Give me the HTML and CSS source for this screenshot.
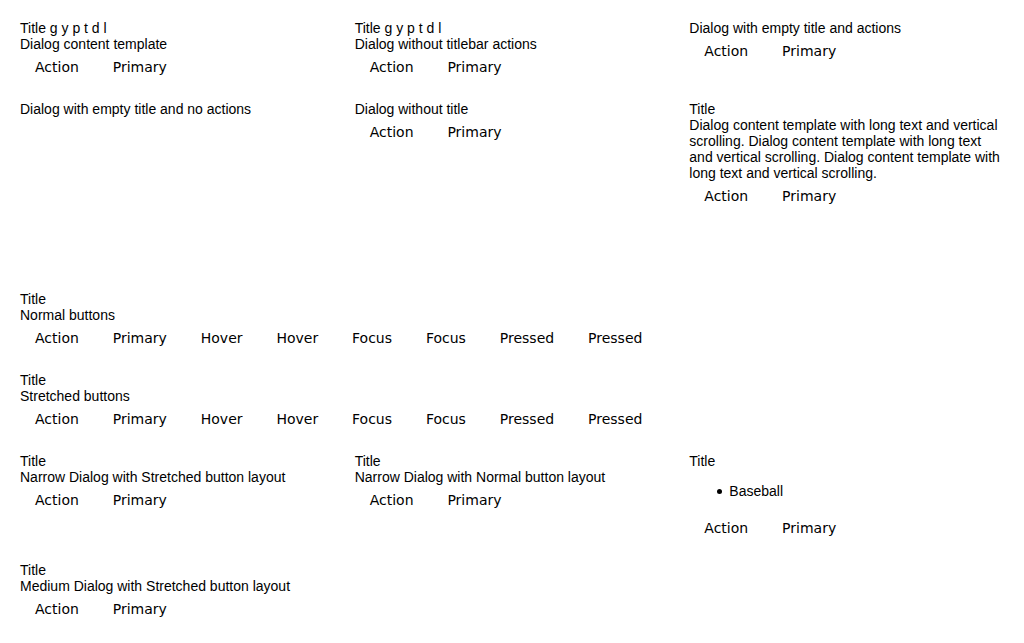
FILE: index.html
```html
<!DOCTYPE html>
<html lang="en">
<head>
<meta charset="utf-8">
<title>Dialog</title>
<link rel="stylesheet" href="styles.css">
</head>
<body>
<main class="grid">
<section class="dialog"><div class="title">Title g y p t d l</div><div>Dialog content template</div><div class="actions"><button>Action</button> <button>Primary</button></div></section>
<section class="dialog"><div class="title">Title g y p t d l</div><div>Dialog without titlebar actions</div><div class="actions"><button>Action</button> <button>Primary</button></div></section>
<section class="dialog"><div>Dialog with empty title and actions</div><div class="actions"><button>Action</button> <button>Primary</button></div></section>

<section class="dialog"><div>Dialog with empty title and no actions</div></section>
<section class="dialog"><div>Dialog without title</div><div class="actions"><button>Action</button> <button>Primary</button></div></section>
<section class="dialog tall"><div class="title">Title</div><div>Dialog content template with long text and vertical scrolling. Dialog content template with long text and vertical scrolling. Dialog content template with long text and vertical scrolling.</div><div class="actions"><button>Action</button> <button>Primary</button></div></section>

<section class="dialog wide"><div class="title">Title</div><div>Normal buttons</div><div class="actions"><button>Action</button> <button>Primary</button> <button>Hover</button> <button>Hover</button> <button>Focus</button> <button>Focus</button> <button>Pressed</button> <button>Pressed</button></div></section>
<section class="dialog wide"><div class="title">Title</div><div>Stretched buttons</div><div class="actions"><button>Action</button> <button>Primary</button> <button>Hover</button> <button>Hover</button> <button>Focus</button> <button>Focus</button> <button>Pressed</button> <button>Pressed</button></div></section>

<section class="dialog"><div class="title">Title</div><div>Narrow Dialog with Stretched button layout</div><div class="actions"><button>Action</button> <button>Primary</button></div></section>
<section class="dialog"><div class="title">Title</div><div>Narrow Dialog with Normal button layout</div><div class="actions"><button>Action</button> <button>Primary</button></div></section>
<section class="dialog"><div class="title">Title</div><ul class="list"><li>Baseball</li></ul><div class="actions"><button>Action</button> <button>Primary</button></div></section>

<section class="dialog"><div class="title">Title</div><div>Medium Dialog with Stretched button layout</div><div class="actions"><button>Action</button> <button>Primary</button></div></section>
</main>
</body>
</html>
```
FILE: styles.css
```css
body {
  margin: 0;
  padding: 20px;
  background: #fff;
  color: #000;
  font: 14px/16px "Liberation Sans", Arial, sans-serif;
}

.grid {
  display: grid;
  grid-template-columns: repeat(3, minmax(0, 1fr));
  column-gap: 20px;
  row-gap: 20px;
}

.wide {
  grid-column: 1 / -1;
}

.tall {
  min-height: 170px;
}

.actions button {
  padding: 7px 15px 5px;
  border: 0;
  background: transparent;
  color: inherit;
  font: 14px/17px "DejaVu Sans", sans-serif;
  vertical-align: top;
}

.list {
  margin: 14px 0;
  padding-left: 40px;
  list-style: none;
}

.list li::before {
  content: "";
  display: inline-block;
  width: 5px;
  height: 5px;
  margin: 0 7px 2px -12px;
  border-radius: 50%;
  background: currentColor;
}
```
